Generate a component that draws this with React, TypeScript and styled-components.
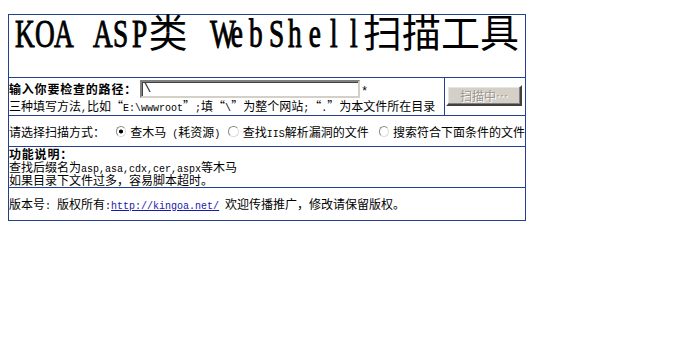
import React from "react";
import styled, { createGlobalStyle } from "styled-components";

const BLUE = "#21418f";

const GlobalStyle = createGlobalStyle`
  html, body { margin: 0; padding: 0; background: #fff; }
  body {
    font-family: "Noto Sans CJK SC", sans-serif;
    font-size: 12px;
    color: #000;
  }
`;

const Page = styled.div`
  padding: 14px 0 0 8px;
`;

const Frame = styled.div`
  width: 518px;
  box-sizing: border-box;
  border: 1px solid ${BLUE};
  display: flex;
  flex-direction: column;
`;

const Row = styled.div<{ $h: number }>`
  height: ${(p) => p.$h}px;
  & + & {
    border-top: 1px solid ${BLUE};
  }
`;

const TitleRow = styled(Row)`
  box-sizing: border-box;
  padding: 3px 0 0 3px;
  line-height: 24px;
  white-space: pre;
`;

const Glyph = styled.span`
  display: inline-block;
  width: 19.5px;
  text-align: center;
  font-family: "Liberation Serif", serif;
  font-size: 39px;
  transform: scaleX(0.7);
  -webkit-text-stroke: 1px #000;
`;

const TitleCjk = styled.span`
  font-family: "Noto Sans CJK SC", sans-serif;
  font-size: 39px;
  font-weight: 400;
`;

const MonoTitle = ({ text }: { text: string }) => (
  <>
    {text.split("").map((c, i) => (
      <Glyph key={i}>{c === " " ? "\u00a0" : c}</Glyph>
    ))}
  </>
);

const PathRow = styled(Row)`
  display: grid;
  grid-template-columns: 435px 80px;
`;

const PathCell = styled.div`
  display: flex;
  flex-direction: column;
`;

const PathLine = styled.div`
  display: flex;
  align-items: center;
  height: 20px;
  white-space: nowrap;
`;

const HintLine = styled.div`
  height: 15px;
  line-height: 15px;
  white-space: pre;
`;

const Label = styled.b`
  font-weight: bold;
  letter-spacing: 0.8px;
`;

const PathInput = styled.input`
  box-sizing: border-box;
  width: 220px;
  height: 18px;
  margin: 2px 1px 0 3px;
  padding: 0 2px;
  border-width: 2px;
  border-style: solid;
  border-color: #808080 #d4d0c8 #d4d0c8 #808080;
  box-shadow: inset 1px 1px 0 #404040;
  font-family: "Liberation Mono", monospace;
  font-size: 12px;
  background: #fff;
  outline: none;
`;

const Star = styled.span`
  font-family: "Liberation Mono", monospace;
  font-size: 12px;
  line-height: 10px;
  margin-top: 8px;
`;

const Mono = styled.span`
  font-family: "Liberation Mono", monospace;
  font-size: 10px;
`;

const ButtonCell = styled.div`
  border-left: 1px solid ${BLUE};
  display: flex;
  align-items: center;
  padding-left: 1px;
`;

const ScanButton = styled.button`
  box-sizing: border-box;
  width: 76px;
  height: 21px;
  margin-top: -2px;
  padding: 0;
  background: #d4d0c8;
  border-width: 2px;
  border-style: solid;
  border-color: #fff #404040 #404040 #fff;
  box-shadow: inset -1px -1px 0 #808080, inset 1px 1px 0 #e8e6e0;
  font-family: "Noto Sans CJK SC", sans-serif;
  font-size: 12px;
  color: #9a968e;
  text-shadow: 1px 1px 0 #fff;
`;

const ModeRow = styled(Row)`
  display: flex;
  align-items: center;
  white-space: pre;
`;

const ModeLabel = styled.span`
  margin-right: 7px;
`;

const Radio = styled.input.attrs({ type: "radio" })<{ $gap?: number }>`
  appearance: none;
  -webkit-appearance: none;
  box-sizing: border-box;
  width: 11px;
  height: 11px;
  margin: 0 4px 0 ${(p) => p.$gap ?? 0}px;
  border-radius: 50%;
  border: 1px solid;
  border-color: #8a8a8a #dcdcdc #dcdcdc #8a8a8a;
  background: #fff;
  &:checked {
    background: radial-gradient(circle, #000 0 1.7px, #fff 2.3px);
  }
`;

const InfoRow = styled(Row)`
  box-sizing: border-box;
  height: 41px;
  white-space: nowrap;
`;

const InfoLine = styled.div`
  height: 13px;
  line-height: 13px;
`;

const FooterRow = styled(Row)`
  line-height: 32px;
  white-space: pre;
`;

const Link = styled.a`
  font-family: "Liberation Mono", monospace;
  font-size: 10px;
  color: #1a1aa8;
  text-decoration: underline;
`;

export default function App() {
  return (
    <Page>
      <GlobalStyle />
      <Frame>
        <TitleRow $h={62}>
          <MonoTitle text="KOA ASP" />
          <TitleCjk>类</TitleCjk>
          <MonoTitle text=" WebShell" />
          <TitleCjk>扫描工具</TitleCjk>
        </TitleRow>
        <PathRow $h={37}>
          <PathCell>
            <PathLine>
              <Label>输入你要检查的路径：</Label>
              <PathInput defaultValue="\" />
              <Star>*</Star>
            </PathLine>
            <HintLine>
              三种填写方法<Mono>,</Mono>比如“<Mono>E:\wwwroot</Mono>”<Mono>;</Mono>填“<Mono>\</Mono>”为整个网站<Mono>;</Mono>“<Mono>.</Mono>”为本文件所在目录
            </HintLine>
          </PathCell>
          <ButtonCell>
            <ScanButton disabled>扫描中…</ScanButton>
          </ButtonCell>
        </PathRow>
        <ModeRow $h={30}>
          <ModeLabel>请选择扫描方式：</ModeLabel>
          <Radio name="mode" defaultChecked $gap={4} />
          <span>
            查木马<Mono> (</Mono>耗资源<Mono>)</Mono>
          </span>
          <Radio name="mode" $gap={8} />
          <span>
            查找<Mono>IIS</Mono>解析漏洞的文件
          </span>
          <Radio name="mode" $gap={10} />
          <span>搜索符合下面条件的文件</span>
        </ModeRow>
        <InfoRow $h={41}>
          <InfoLine>
            <Label>功能说明：</Label>
          </InfoLine>
          <InfoLine>
            查找后缀名为<Mono>asp,asa,cdx,cer,aspx</Mono>等木马
          </InfoLine>
          <InfoLine>如果目录下文件过多，容易脚本超时。</InfoLine>
        </InfoRow>
        <FooterRow $h={32}>
          版本号<Mono>: </Mono>版权所有<Mono>:</Mono>
          <Link href="#">http://kingoa.net/</Link>
          <Mono> </Mono>欢迎传播推广，修改请保留版权。
        </FooterRow>
      </Frame>
    </Page>
  );
}
